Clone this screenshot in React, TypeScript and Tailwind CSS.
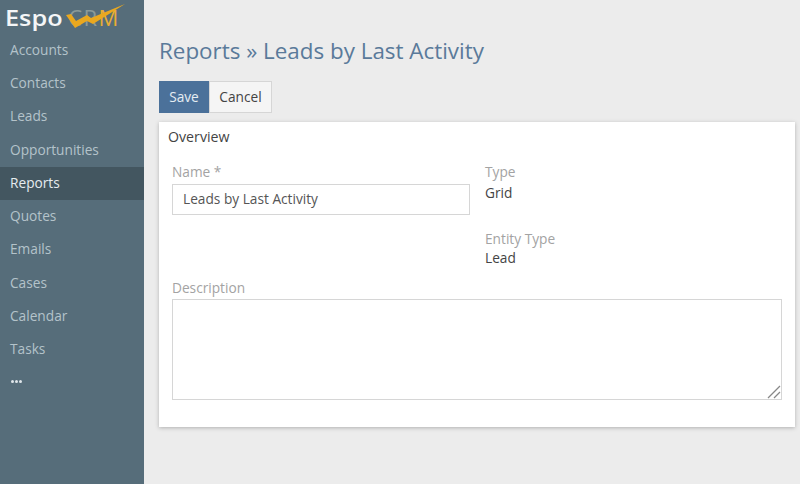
const navItems = ["Accounts", "Contacts", "Leads", "Opportunities", "Reports", "Quotes", "Emails", "Cases", "Calendar", "Tasks"];

function Logo() {
  return (
    <div className="relative flex h-[33.5px] items-start pl-[5px] pt-[6px] leading-none">
      <span className="inline-block origin-left scale-x-[1.15] text-[22px] font-semibold leading-[22px] text-[#f4f6f7]">Espo</span>
      <span className="ml-[13px] mt-[-1px] text-[22px] leading-[24px] tracking-[1.5px] text-[#8b9a98]">
        CR<span className="text-[#e8ad34]">M</span>
      </span>
      <svg className="absolute left-[62px] top-0" width="66" height="30" viewBox="0 0 66 30" fill="none">
        <path d="M4 15 L9 14 L14 21 L25 15 L29 18 L63 4 L31 24 L25 21 L13 28 Z" fill="#eaa81f" />
      </svg>
    </div>
  );
}

function Sidebar() {
  return (
    <aside className="flex w-[144px] shrink-0 flex-col bg-[#566d7a]">
      <Logo />
      {navItems.map((item) => (
        <div
          key={item}
          className={
            item === "Reports"
              ? "flex h-[33.25px] items-center bg-[#435660] pl-[10px] text-[#e6ecef]"
              : "flex h-[33.25px] items-center pl-[10px] text-[#b4c3ca]"
          }
        >
          {item}
        </div>
      ))}
      <div className="flex h-[30px] items-center gap-[1px] pl-[11px]">
        <span className="size-[3px] rounded-full bg-[#dfe6ea]" />
        <span className="size-[3px] rounded-full bg-[#dfe6ea]" />
        <span className="size-[3px] rounded-full bg-[#dfe6ea]" />
      </div>
    </aside>
  );
}

export default function App() {
  return (
    <div className="flex h-[484px] w-[800px] overflow-hidden bg-[#ececec] text-[13.7px] text-[#444] [font-family:'Open_Sans',sans-serif]">
      <Sidebar />
      <main className="min-w-0 flex-1 pl-[15px] pr-[5px]">
        <h1 className="mt-[34px] text-[22.4px] leading-[33px] text-[#5a7a9a]">Reports » Leads by Last Activity</h1>
        <div className="mt-[14px] flex">
          <button className="h-[32px] w-[50px] bg-[#4b719a] text-[#e6edf3]">Save</button>
          <button className="h-[32px] w-[63px] border border-[#d6d6d6] bg-[#f5f5f5]">Cancel</button>
        </div>
        <section className="mt-[9px] h-[305px] bg-white pt-[5px] shadow-[0_1px_4px_rgba(0,0,0,0.25)]">
          <h2 className="pl-[9px] text-[14.2px] leading-[20px] text-[#444]">Overview</h2>
          <div className="mt-[16px] flex pl-[13px]">
            <div className="w-[298px]">
              <div className="leading-[18px] text-[#a3a3a3]">Name *</div>
              <div className="mt-[3px] flex h-[31px] items-center border border-[#d6d6d6] pl-[10px] text-[#555]">Leads by Last Activity</div>
            </div>
            <div className="ml-[15px]">
              <div className="leading-[18px] text-[#a3a3a3]">Type</div>
              <div className="mt-[2px] leading-[20px]">Grid</div>
              <div className="mt-[27px] leading-[18px] text-[#a3a3a3]">Entity Type</div>
              <div className="leading-[20px]">Lead</div>
            </div>
          </div>
          <div className="px-[13px]">
            <div className="mt-[11px] leading-[18px] text-[#a3a3a3]">Description</div>
            <div className="relative mt-[2px] h-[101px] border border-[#d6d6d6]">
              <svg className="absolute bottom-0 right-0" width="15" height="15" viewBox="0 0 15 15" stroke="#888" strokeWidth="1.3">
                <path d="M2 14 L14 2 M8 14 L14 8" />
              </svg>
            </div>
          </div>
        </section>
      </main>
    </div>
  );
}
